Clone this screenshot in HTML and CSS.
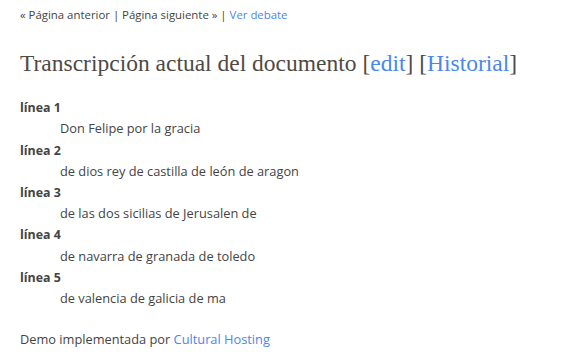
FILE: index.html
```html
<!DOCTYPE html>
<html lang="es">
<head>
<meta charset="utf-8">
<title>Transcripción</title>
<link rel="stylesheet" href="styles.css">
</head>
<body>
<div class="page">
  <p class="nav">« Página anterior | Página siguiente » | <a href="#">Ver debate</a></p>
  <h1 class="title">Transcripción actual del documento [<a href="#">edit</a>] [<a href="#">Historial</a>]</h1>
  <dl class="lines">
    <dt>línea 1</dt>
    <dd>Don Felipe por la gracia</dd>
    <dt>línea 2</dt>
    <dd>de dios rey de castilla de león de aragon</dd>
    <dt>línea 3</dt>
    <dd>de las dos sicilias de Jerusalen de</dd>
    <dt>línea 4</dt>
    <dd>de navarra de granada de toledo</dd>
    <dt>línea 5</dt>
    <dd>de valencia de galicia de ma</dd>
  </dl>
  <p class="footer">Demo implementada por <a href="#">Cultural Hosting</a></p>
</div>
</body>
</html>
```
FILE: styles.css
```css
html, body {
  margin: 0;
  padding: 0;
  background: #fff;
}
body {
  font-family: "Open Sans", "Noto Sans", sans-serif;
  font-size: 12.8px;
  line-height: 21.2px;
  color: #444;
}
a {
  color: #4a86f0;
  text-decoration: none;
}
.page {
  padding: 4px 20px 0 20px;
}
.nav {
  margin: 0;
  font-size: 11.4px;
}
.title {
  font-family: "Liberation Serif", "DejaVu Serif", serif;
  font-weight: normal;
  font-size: 23.5px;
  line-height: 30px;
  color: #4f4a45;
  margin: 23px 0 0 0;
}
.lines {
  margin: 19px 0 0 0;
}
.lines dt {
  font-weight: bold;
  font-size: 12.4px;
}
.lines dd {
  margin: 0 0 0 40px;
}
.footer {
  margin: 20px 0 0 0;
}
```
